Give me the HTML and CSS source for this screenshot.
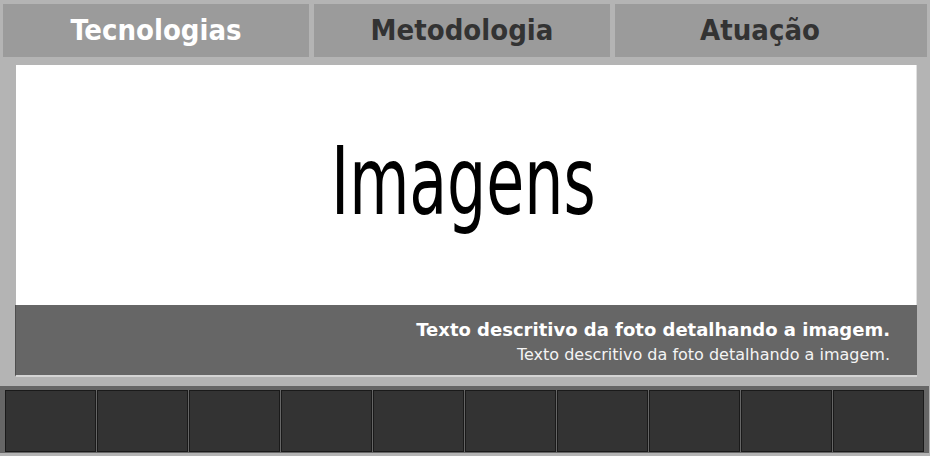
FILE: index.html
```html
<!DOCTYPE html>
<html lang="pt">
<head>
<meta charset="utf-8">
<title>Imagens</title>
<link rel="stylesheet" href="styles.css">
</head>
<body>
<nav class="tabs">
  <a class="tab tab-1 active">Tecnologias</a>
  <a class="tab tab-2">Metodologia</a>
  <a class="tab tab-3">Atuação</a>
</nav>
<main class="stage">
  <div class="photo"><span class="photo-label">Imagens</span></div>
  <div class="caption">
    <p class="caption-title">Texto descritivo da foto detalhando a imagem.</p>
    <p class="caption-sub">Texto descritivo da foto detalhando a imagem.</p>
  </div>
</main>
<div class="film">
  <div class="thumb"></div><div class="thumb"></div><div class="thumb"></div><div class="thumb"></div><div class="thumb"></div>
  <div class="thumb"></div><div class="thumb"></div><div class="thumb"></div><div class="thumb"></div><div class="thumb"></div>
</div>
</body>
</html>
```
FILE: styles.css
```css
html, body {
  margin: 0;
  padding: 0;
}
body {
  width: 930px;
  height: 456px;
  overflow: hidden;
  background: #b4b4b4;
  font-family: "DejaVu Sans Condensed", "DejaVu Sans", sans-serif;
}
.tabs {
  display: flex;
  gap: 5px;
  padding: 4px 3px 0 3px;
  height: 53px;
}
.tab {
  background: #9b9b9b;
  height: 53px;
  display: flex;
  align-items: center;
  justify-content: center;
  font-weight: bold;
  font-size: 29px;
  color: #333333;
  padding-bottom: 2px;
  box-sizing: border-box;
}
.tab.active { color: #ffffff; }
.tab-1 { width: 306px; }
.tab-2 { width: 296px; }
.tab-3 { width: 312px; padding-right: 22px; }
.stage {
  margin: 8px 0 0 16px;
  width: 901px;
}
.photo {
  height: 240px;
  background: #ffffff;
  border-right: 1px solid #e0e0e0;
  box-sizing: border-box;
  display: flex;
  align-items: center;
  justify-content: center;
  color: #000;
  font-family: "DejaVu Sans Condensed", sans-serif;
  font-size: 94px;
  line-height: 1;
  padding: 0 6px 6px 0;
}
.photo-label {
  display: inline-block;
  transform: scaleX(0.73);
}
.caption {
  background: #666666;
  border-left: 1px solid #4e4e4e;
  border-bottom: 2px solid #d4d4d4;
  margin-left: -1px;
  padding: 13px 27px 0 0;
  box-sizing: border-box;
  height: 72px;
  text-align: right;
  color: #ffffff;
  font-family: "DejaVu Sans", sans-serif;
}
.caption p { margin: 0; }
.caption-title {
  font-weight: bold;
  font-size: 18px;
  line-height: 24px;
}
.caption-sub {
  font-size: 16px;
  line-height: 26px;
  color: #f4f4f4;
}
.film {
  margin-top: 9px;
  width: 929px;
  height: 67px;
  background: #666666;
  box-sizing: border-box;
  padding: 4px 0 0 5px;
  display: grid;
  grid-template-columns: repeat(10, 91px);
  grid-template-rows: 62px;
  column-gap: 1px;
}
.thumb {
  background: #333333;
  border: 1px solid #1a1a1a;
  box-sizing: border-box;
}
```
